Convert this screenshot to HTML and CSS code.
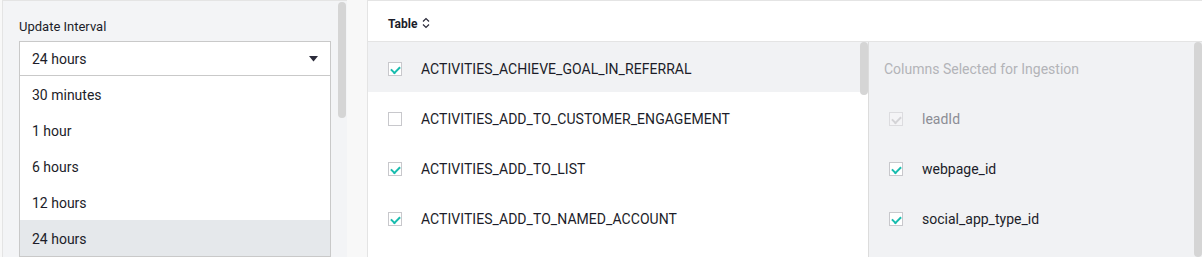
FILE: index.html
```html
<!DOCTYPE html>
<html>
<head>
<meta charset="utf-8">
<link rel="stylesheet" href="styles.css">
</head>
<body>
<div class="page">
  <aside class="side">
    <div class="thumb side-thumb"></div>
    <label class="field-label">Update Interval</label>
    <div class="select">
      <span>24 hours</span>
      <svg class="caret" width="9" height="6" viewBox="0 0 9 6"><path d="M0 0H9L4.5 5.5Z" fill="#2b2b3a"/></svg>
    </div>
    <ul class="menu">
      <li>30 minutes</li>
      <li>1 hour</li>
      <li>6 hours</li>
      <li>12 hours</li>
      <li class="active">24 hours</li>
    </ul>
  </aside>
  <section class="main">
    <div class="head">
      <span class="head-title">Table</span>
      <svg class="sort" width="8" height="12" viewBox="0 0 8 12"><path d="M1 4.5L4 1.5L7 4.5M1 7.5L4 10.5L7 7.5" fill="none" stroke="#2b2b3a" stroke-width="1.2"/></svg>
    </div>
    <div class="body">
      <div class="tables">
        <div class="thumb list-thumb"></div>
        <div class="row selected"><span class="cb checked"></span>ACTIVITIES_ACHIEVE_GOAL_IN_REFERRAL</div>
        <div class="row"><span class="cb"></span>ACTIVITIES_ADD_TO_CUSTOMER_ENGAGEMENT</div>
        <div class="row"><span class="cb checked"></span>ACTIVITIES_ADD_TO_LIST</div>
        <div class="row"><span class="cb checked"></span>ACTIVITIES_ADD_TO_NAMED_ACCOUNT</div>
      </div>
      <div class="columns">
        <div class="thumb col-thumb"></div>
        <div class="col-title">Columns Selected for Ingestion</div>
        <div class="col-row disabled"><span class="cb checked"></span>leadId</div>
        <div class="col-row"><span class="cb checked"></span>webpage_id</div>
        <div class="col-row"><span class="cb checked"></span>social_app_type_id</div>
      </div>
    </div>
  </section>
</div>
</body>
</html>
```

FILE: styles.css
```css
* { box-sizing: border-box; }
html, body { margin: 0; padding: 0; }
body {
  background: #f8f8f8;
  font-family: Roboto, "Noto Sans", sans-serif;
  color: #1c1d29;
  width: 1202px;
  height: 257px;
  overflow: hidden;
}
.page {
  display: flex;
  gap: 20px;
  height: 257px;
}
.side {
  position: relative;
  margin-left: 2px;
  width: 345px;
  flex: none;
  background: #f3f4f6;
  border-top: 1px solid #e4e4e4;
  border-left: 1px solid #e4e4e4;
  padding: 18px 0 0 16px;
}
.thumb {
  position: absolute;
  background: #d5d5d5;
  border-radius: 4px;
  width: 8px;
}
.side-thumb { right: 1px; top: 1px; height: 116px; }
.field-label {
  display: block;
  font-size: 13px;
  line-height: 15px;
  margin-bottom: 7px;
}
.select {
  width: 312px;
  height: 35px;
  background: #fff;
  border: 1px solid #c9c9c9;
  display: flex;
  align-items: center;
  justify-content: space-between;
  padding: 1px 12px 0;
  font-size: 14px;
}
.caret { margin-top: 0; }
.menu {
  list-style: none;
  margin: 0;
  padding: 0;
  width: 312px;
  background: #fff;
  border: 1px solid #c9c9c9;
  border-top: none;
}
.menu li {
  height: 36px;
  display: flex;
  align-items: center;
  padding: 2px 0 0 12px;
  font-size: 14px;
}
.menu li.active { background: #e5e8eb; }
.main {
  flex: 1;
  background: #fff;
  border-top: 1px solid #e4e4e4;
  border-left: 1px solid #e4e4e4;
  display: flex;
  flex-direction: column;
}
.head {
  height: 41px;
  flex: none;
  border-bottom: 1px solid #e4e4e4;
  display: flex;
  align-items: center;
  padding-left: 20px;
  padding-top: 5px;
  gap: 5px;
}
.head-title { font-size: 12px; font-weight: 700; }
.sort { margin-top: -1px; }
.body { flex: 1; display: flex; }
.tables { position: relative; width: 500px; flex: none; }
.list-thumb { right: 0; top: 0; height: 53px; }
.row {
  height: 50px;
  display: flex;
  align-items: center;
  padding-left: 20px;
  padding-top: 3px;
  font-size: 14px;
  letter-spacing: 0.05px;
}
.row.selected { background: #f1f2f4; }
.cb {
  width: 14px;
  height: 14px;
  border: 1px solid #c8c8cc;
  background: #fff;
  margin-right: 19px;
  flex: none;
  position: relative;
}
.cb.checked::after {
  content: "";
  position: absolute;
  left: 3px;
  top: 0px;
  width: 7px;
  height: 4px;
  border-left: 2px solid #18bcae;
  border-bottom: 2px solid #18bcae;
  transform: translate(-1px, 3px) rotate(-45deg);
}
.columns {
  position: relative;
  flex: 1;
  background: #f1f2f4;
  border-left: 1px solid #dcdcdc;
  padding-left: 15px;
}
.col-thumb { right: 0; top: 0; height: 215px; }
.col-title {
  height: 50px;
  display: flex;
  align-items: center;
  padding-top: 3px;
  font-size: 14px;
  color: #b3b4b8;
}
.col-row {
  height: 50px;
  display: flex;
  align-items: center;
  padding-left: 5px;
  padding-top: 3px;
  font-size: 14px;
}
.col-row.disabled { color: #8c8d94; }
.col-row.disabled .cb { border-color: #dcdcdf; background: #f4f4f6; }
.col-row.disabled .cb::after { border-color: #d3d3d6; }
```
